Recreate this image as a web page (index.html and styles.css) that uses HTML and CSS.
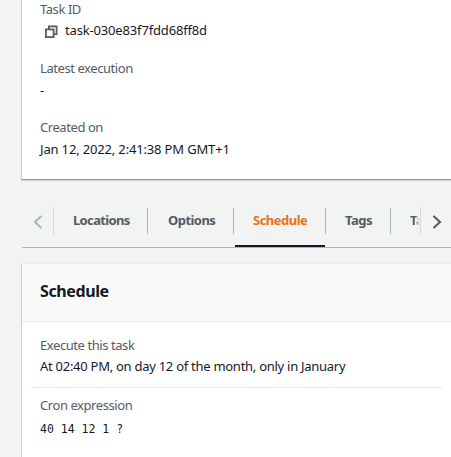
FILE: index.html
```html
<!DOCTYPE html>
<html lang="en">
<head>
<meta charset="utf-8">
<title>Task details</title>
<link rel="stylesheet" href="styles.css">
</head>
<body>
<section class="card details">
  <div class="field">
    <div class="label">Task ID</div>
    <div class="value copy-row">
      <svg class="copy" width="14" height="14" viewBox="0 0 14 14" fill="none" stroke="#545b64" stroke-width="1.8"><path d="M4.900 4V1.400h7.700v7.700H10"/><path d="M1.900 4.400h7.700v7.700H1.900z"/></svg>
      <span>task-030e83f7fdd68ff8d</span>
    </div>
  </div>
  <div class="field">
    <div class="label">Latest execution</div>
    <div class="value">-</div>
  </div>
  <div class="field">
    <div class="label">Created on</div>
    <div class="value">Jan 12, 2022, 2:41:38 PM GMT+1</div>
  </div>
</section>
<nav class="tabs">
  <div class="scroll prev"><svg width="10" height="14" viewBox="0 0 10 14" fill="none" stroke="#aab7b8" stroke-width="2"><path d="M8.500 1L2 7l6.500 6"/></svg></div>
  <div class="tab locations">Locations</div>
  <div class="tab options">Options</div>
  <div class="tab schedule active">Schedule</div>
  <div class="tab tags">Tags</div>
  <div class="tab clipped">Ta</div>
  <div class="scroll next"><svg width="10" height="14" viewBox="0 0 10 14" fill="none" stroke="#545b64" stroke-width="2"><path d="M1.500 1L8 7l-6.500 6"/></svg></div>
</nav>
<section class="card plan">
  <h2>Schedule</h2>
  <div class="row">
    <div class="label">Execute this task</div>
    <div class="value sentence">At 02:40 PM, on day 12 of the month, only in January</div>
  </div>
  <div class="row">
    <div class="label">Cron expression</div>
    <div class="value mono">40 14 12 1 ?</div>
  </div>
</section>
</body>
</html>
```
FILE: styles.css
```css
* { box-sizing: border-box; }
body {
  margin: 0;
  height: 457px;
  overflow: hidden;
  background: #f2f3f3;
  color: #16191f;
  font: 13px/22px "Noto Sans", sans-serif;
}
.card {
  margin-left: 21px;
  background: #fff;
  border-left: 1px solid #ccd0d1;
}
.details {
  height: 180px;
  padding-left: 18px;
  border-bottom: 1px solid #879596;
  box-shadow: 0 1px 1px #d5dbdb;
  overflow: hidden;
}
.field { height: 59px; }
.field:first-child { height: 58px; margin-top: -1px; }
.field:first-child .label { height: 20px; line-height: 20px; }
.label { height: 22px; color: #545b64; letter-spacing: -0.43px; }
.label, .value { white-space: nowrap; }
.value { letter-spacing: -0.16px; }
.sentence { letter-spacing: -0.27px; }
.copy-row { display: flex; }
.copy { margin: 6px 7px 0 4px; }
.tabs {
  display: flex;
  height: 68px;
  margin: 0 0 0 22px;
  padding-top: 28px;
  border-bottom: 1px solid #aab7b8;
  color: #545b64;
  font-weight: 700;
  letter-spacing: -0.45px;
}
.tab {
  height: 26px;
  padding-left: 19px;
  border-right: 1px solid #aab7b8;
  line-height: 25px;
  white-space: nowrap;
}
.scroll { height: 28px; margin-top: -1px; }
.prev { width: 32px; padding: 8px 0 0 11px; border-right: 1px solid #d5dbdb; }
.next { width: 31px; padding: 8px 0 0 10.5px; border-left: 1px solid #d5dbdb; }
.scroll svg { display: block; }
.locations { width: 94px; letter-spacing: -0.65px; }
.options { width: 86px; padding-left: 20px; letter-spacing: -0.55px; }
.schedule { width: 92px; letter-spacing: -0.5px; }
.tags { width: 65px; }
.clipped {
  width: 29px;
  border: 0;
  overflow: hidden;
  -webkit-mask-image: linear-gradient(to right, #000 24px, transparent 29px);
  mask-image: linear-gradient(to right, #000 24px, transparent 29px);
}
.active { position: relative; color: #ec7211; }
.active::after {
  content: "";
  position: absolute;
  left: 1px;
  top: 37px;
  width: 90px;
  height: 2px;
  background: #16191f;
}
.plan {
  height: 194px;
  margin-top: 15px;
  border-top: 1px solid #eaeded;
}
h2 {
  height: 58px;
  margin: 0;
  padding-left: 18px;
  background: #fafafa;
  border-bottom: 1px solid #eaeded;
  font-size: 16px;
  line-height: 55px;
  letter-spacing: -0.4px;
}
.row {
  height: 66px;
  margin: 0 9px;
  padding: 12px 9px 0;
  border-bottom: 1px solid #eaeded;
}
.plan .label { height: 21px; }
.row:last-child { height: auto; padding-top: 6px; border: 0; }
.mono { font: 11.5px/28px "DejaVu Sans Mono", monospace; letter-spacing: 0; }
```
